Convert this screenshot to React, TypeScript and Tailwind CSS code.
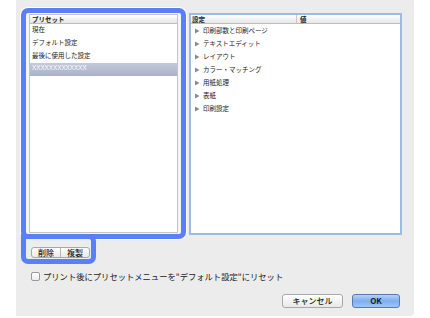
import React from 'react';

const presets = ['現在', 'デフォルト設定', '最後に使用した設定', 'XXXXXXXXXXXXX'];
const settings = ['印刷部数と印刷ページ', 'テキストエディット', 'レイアウト', 'カラー・マッチング', '用紙処理', '表紙', '印刷設定'];

const font = { fontFamily: '"Noto Sans CJK JP", "Noto Sans", sans-serif' };

const Triangle = () => (
  <svg width="5" height="6" viewBox="0 0 5 6" className="shrink-0">
    <path d="M0 0.5 L4.5 3 L0 5.5 Z" fill="#8a8a8a" />
  </svg>
);

const App = () => {
  return (
    <div className="w-[430px] h-[318px] bg-white" style={font}>
      <div className="ml-4 w-[398px] h-[316px] bg-[#ececec] rounded-br-[4px] pl-[5px] pt-[8px] flex flex-col">
        <div className="flex items-start">
          {/* presets column */}
          <div className="w-[165px] flex flex-col">
            <div className="relative z-10 h-[231px] border-[5px] border-[#5b7ff7] rounded-[7px] bg-[#f5f5f5] px-[3px] py-px shadow-[0_0_0_1px_#ffffff] flex">
              <div className="flex-1 bg-white border border-[#c4c4c4] flex flex-col">
                <div className="h-[9px] bg-gradient-to-b from-white to-[#e6e6e6] border-b border-[#bdbdbd] pl-[2px] text-[6.5px] leading-[8px] font-bold text-[#222]">
                  プリセット
                </div>
                {presets.map((p, i) =>
                  i === 3 ? (
                    <div
                      key={p}
                      className="h-[13px] pl-[2px] text-[6.3px] leading-[9px] text-white bg-gradient-to-b from-[#c3cadb] to-[#a8b2c8] font-['Liberation_Sans',sans-serif]"
                    >
                      {p}
                    </div>
                  ) : (
                    <div key={p} className="h-[13px] pl-[2px] text-[6.5px] leading-[11px] text-[#222]">
                      {p}
                    </div>
                  )
                )}
              </div>
            </div>
            <div className="relative z-20 -mt-[5px] w-[75px] h-[30px] border-[5px] border-[#5b7ff7] rounded-b-[7px] rounded-tr-[7px] bg-[#ececec] pl-[5px] pt-[8px]">
              <div className="flex w-[59px] h-[11px] rounded-[3px] border border-[#a8a8a8] bg-gradient-to-b from-white to-[#e9e9e9] text-[8px] leading-[9px] text-[#222] font-medium">
                <div className="flex-1 text-center border-r border-[#b5b5b5]">削除</div>
                <div className="flex-1 text-center">複製</div>
              </div>
            </div>
          </div>

          {/* settings panel */}
          <div className="ml-[3px] mt-[5px] w-[213px] h-[222px] bg-white border-2 border-[#9dbbe6] flex flex-col">
            <div className="h-[9px] flex bg-gradient-to-b from-white to-[#e6e6e6] border-b border-[#bdbdbd] text-[6.5px] leading-[8px] font-bold text-[#222]">
              <div className="w-[106px] pl-px border-r border-[#c8c8c8]">設定</div>
              <div className="pl-[3px]">値</div>
            </div>
            {settings.map((s) => (
              <div key={s} className="h-[13px] flex items-center gap-[3px] pl-[4px] text-[6.5px] text-[#222]">
                <Triangle />
                <span className="leading-[9px]">{s}</span>
              </div>
            ))}
          </div>
        </div>

        <div className="mt-[6px] ml-[10px] flex items-center gap-[3px] text-[8.3px] text-[#222]">
          <div className="w-[9px] h-[9px] rounded-[2px] border border-[#9a9a9a] bg-gradient-to-b from-white to-[#ececec]" />
          <span>プリント後にプリセットメニューを"デフォルト設定"にリセット</span>
        </div>

        <div className="mt-[12px] pr-[14px] flex justify-end gap-[9px] text-[8px] text-[#222] font-medium">
          <div className="w-[61px] h-[14px] rounded-[3px] border border-[#a8a8a8] bg-gradient-to-b from-white to-[#e8e8e8] flex items-center justify-center">
            キャンセル
          </div>
          <div className="w-[48px] h-[14px] rounded-[3px] border border-[#5a78b0] bg-gradient-to-b from-[#b3d2f8] via-[#7eaeee] to-[#9cc6f6] flex items-center justify-center font-bold">
            OK
          </div>
        </div>
      </div>
    </div>
  );
};

export default App;
